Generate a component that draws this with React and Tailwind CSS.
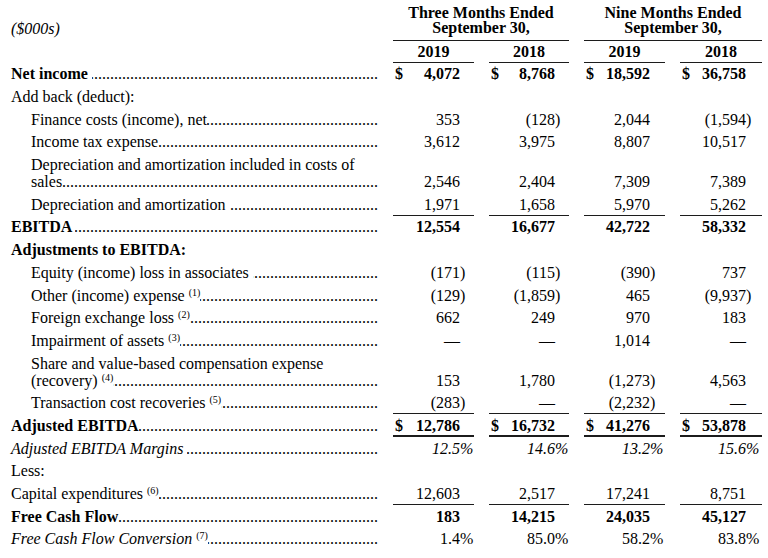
import React from "react";

const COLS = "grid grid-cols-[378px_81px_80px_81px_82px] gap-x-[15px]";
const PR = ["pr-[14px]", "pr-[14px]", "pr-[15px]", "pr-[16px]"];
const DOTS = ".".repeat(120);

const rows = [
  { label: "Net income ", bold: true, dollar: true, vals: ["4,072", "8,768", "18,592", "36,758"] },
  { label: "Add back (deduct):", noDots: true },
  { label: "Finance costs (income), net", indent: true, vals: ["353", "(128)", "2,044", "(1,594)"] },
  { label: "Income tax expense", indent: true, vals: ["3,612", "3,975", "8,807", "10,517"] },
  {
    label: "sales",
    first: "Depreciation and amortization included in costs of",
    indent: true,
    vals: ["2,546", "2,404", "7,309", "7,389"],
  },
  { label: "Depreciation and amortization ", indent: true, line: 1, vals: ["1,971", "1,658", "5,970", "5,262"] },
  { label: "EBITDA ", bold: true, vals: ["12,554", "16,677", "42,722", "58,332"] },
  { label: "Adjustments to EBITDA:", bold: true, noDots: true },
  { label: "Equity (income) loss in associates ", indent: true, vals: ["(171)", "(115)", "(390)", "737"] },
  { label: "Other (income) expense", sup: "(1)", indent: true, vals: ["(129)", "(1,859)", "465", "(9,937)"] },
  { label: "Foreign exchange loss", sup: "(2)", indent: true, vals: ["662", "249", "970", "183"] },
  { label: "Impairment of assets", sup: "(3)", indent: true, vals: ["—", "—", "1,014", "—"] },
  {
    label: "(recovery)",
    first: "Share and value-based compensation expense",
    sup: "(4)",
    indent: true,
    vals: ["153", "1,780", "(1,273)", "4,563"],
  },
  { label: "Transaction cost recoveries", sup: "(5)", indent: true, line: 1, vals: ["(283)", "—", "(2,232)", "—"] },
  { label: "Adjusted EBITDA", bold: true, dollar: true, line: 2, vals: ["12,786", "16,732", "41,276", "53,878"] },
  { label: "Adjusted EBITDA Margins ", italic: true, italicVals: true, vals: ["12.5%", "14.6%", "13.2%", "15.6%"] },
  { label: "Less:", noDots: true },
  { label: "Capital expenditures", sup: "(6)", line: 1, vals: ["12,603", "2,517", "17,241", "8,751"] },
  { label: "Free Cash Flow", bold: true, vals: ["183", "14,215", "24,035", "45,127"] },
  { label: "Free Cash Flow Conversion", sup: "(7)", italic: true, vals: ["1.4%", "85.0%", "58.2%", "83.8%"] },
];

function Val({ v }) {
  if (v.startsWith("(")) {
    return (
      <span>
        {v.slice(0, -1)}
        <span className="-mr-[5.33px]">)</span>
      </span>
    );
  }
  if (v.endsWith("%")) {
    return (
      <span>
        {v.slice(0, -1)}
        <span className="-mr-[13.3px]">%</span>
      </span>
    );
  }
  return <span>{v}</span>;
}

function Label({ row }) {
  const weight = row.bold ? "font-bold" : "";
  const style = row.italic ? "italic" : "";
  return (
    <div
      className={`flex flex-col justify-end pb-[2.85px] ${row.indent ? "pl-[31px]" : "pl-[11px]"}`}
    >
      {row.first ? <div className="whitespace-nowrap">{row.first}</div> : null}
      <div className="flex min-w-0 items-end">
        <span className={`whitespace-pre ${weight} ${style}`}>
          {row.label}
          {row.sup ? (
            <>
              {" "}
              <sup className="text-[10px] not-italic">{row.sup}</sup>
            </>
          ) : null}
        </span>
        {row.noDots ? null : (
          <span dir="rtl" className="min-w-0 flex-1 overflow-hidden whitespace-nowrap">
            {DOTS}
          </span>
        )}
      </div>
    </div>
  );
}

function Row({ row }) {
  const height = row.first ? "h-[39.7px]" : "h-[22.7px]";
  const border =
    row.line === 2
      ? "border-b-2 border-[#1c1c1c] pb-[0.85px]"
      : row.line === 1
        ? "border-b border-[#1c1c1c] pb-[1.85px]"
        : "pb-[2.85px]";
  return (
    <div className={`${COLS} ${height}`}>
      <Label row={row} />
      {(row.vals || [null, null, null, null]).map((v, i) => (
        <div
          key={i}
          className={`flex items-end ${row.dollar ? "justify-between pl-[2px]" : "justify-end"} ${PR[i]} ${
            row.vals ? border : ""
          } ${row.bold ? "font-bold" : ""} ${row.italicVals ? "italic" : ""}`}
        >
          {row.dollar ? <span>$</span> : null}
          {v ? <Val v={v} /> : null}
        </div>
      ))}
    </div>
  );
}

export default function App() {
  return (
    <div className="h-[558px] w-[768px] overflow-hidden bg-white font-['Liberation_Serif',serif] text-[16px] leading-[17px] text-black">
      <div className={`${COLS} h-[41px]`}>
        <div className="pl-[11px] pt-[19.5px] italic">($000s)</div>
        <div className="col-span-2 border-b border-[#1c1c1c] pt-[4.5px] text-center font-bold leading-[15px]">
          Three Months Ended
          <br />
          September 30,
        </div>
        <div className="col-span-2 border-b border-[#1c1c1c] pt-[4.5px] text-center font-bold leading-[15px]">
          Nine Months Ended
          <br />
          September 30,
        </div>
      </div>
      <div className={`${COLS} h-[21.5px]`}>
        <div />
        {["2019", "2018", "2019", "2018"].map((y, i) => (
          <div key={i} className="flex items-center justify-center border-b border-[#1c1c1c] font-bold">
            {y}
          </div>
        ))}
      </div>
      {rows.map((row, i) => (
        <Row key={i} row={row} />
      ))}
    </div>
  );
}
